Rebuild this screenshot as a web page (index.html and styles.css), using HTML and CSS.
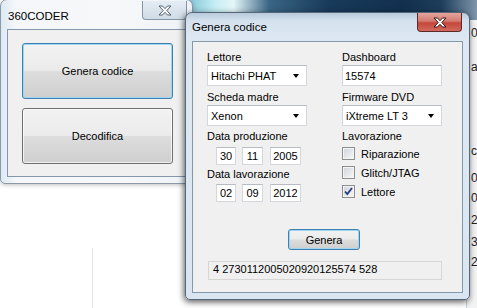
FILE: index.html
```html
<!DOCTYPE html>
<html>
<head>
<meta charset="utf-8">
<link rel="stylesheet" href="styles.css">
</head>
<body>
<div class="desk-top"></div>
<div class="desk-line"></div>
<div class="bgwin">
  <span class="bgrow r1">0</span>
  <span class="bgrow r2">a</span>
  <span class="bgrow r3">c</span>
  <span class="bgrow r4">0</span>
  <span class="bgrow r5">0</span>
  <span class="bgrow r6">2</span>
  <span class="bgrow r7">3</span>
  <span class="bgrow r8">2</span>
</div>

<div class="win win1">
  <div class="titlebar">
    <span class="title t1">360CODER</span>
    <div class="close inactive">
      <svg width="14" height="11" viewBox="0 0 14 11"><path d="M1 1h3.5l2.5 2.7 2.5-2.7h3.5l-4.2 4.5 4.2 4.5h-3.5l-2.5-2.7-2.5 2.7h-3.5l4.2-4.5z" fill="#fff" stroke="#55606c" stroke-width="1"/></svg>
    </div>
  </div>
  <div class="client c1">
    <button class="btn focused big">Genera codice</button>
    <button class="btn big">Decodifica</button>
  </div>
</div>

<div class="win win2">
  <div class="titlebar">
    <span class="title t2">Genera codice</span>
    <div class="close active">
      <svg width="14" height="11" viewBox="0 0 14 11"><path d="M1 1h3.5l2.5 2.7 2.5-2.7h3.5l-4.2 4.5 4.2 4.5h-3.5l-2.5-2.7-2.5 2.7h-3.5l4.2-4.5z" fill="#fff" stroke="#3b1212" stroke-width="1"/></svg>
    </div>
  </div>
  <div class="client c2">
    <div class="cols">
      <div class="col left">
        <div class="lbl">Lettore</div>
        <div class="combo"><span>Hitachi PHAT</span><i class="arrow"></i></div>
        <div class="lbl l2">Scheda madre</div>
        <div class="combo"><span>Xenon</span><i class="arrow"></i></div>
        <div class="lbl l3">Data produzione</div>
        <div class="dates">
          <div class="tb d2">30</div>
          <div class="tb d2b">11</div>
          <div class="tb d4">2005</div>
        </div>
        <div class="lbl l4">Data lavorazione</div>
        <div class="dates d-second">
          <div class="tb d2">02</div>
          <div class="tb d2b">09</div>
          <div class="tb d4">2012</div>
        </div>
      </div>
      <div class="col right">
        <div class="lbl">Dashboard</div>
        <div class="tb field">15574</div>
        <div class="lbl l2">Firmware DVD</div>
        <div class="combo"><span>iXtreme LT 3</span><i class="arrow"></i></div>
        <div class="lbl l3">Lavorazione</div>
        <div class="checks">
          <div class="chk"><span class="box"></span><span>Riparazione</span></div>
          <div class="chk"><span class="box"></span><span>Glitch/JTAG</span></div>
          <div class="chk"><span class="box checked"><svg width="9" height="9" viewBox="0 0 9 9"><path d="M1 4.5l2.3 2.6L8 1" fill="none" stroke="#243f86" stroke-width="1.8"/></svg></span><span>Lettore</span></div>
        </div>
      </div>
    </div>
    <div class="btnrow"><button class="btn focused small">Genera</button></div>
    <div class="result">4 2730112005020920125574 528</div>
  </div>
</div>
</body>
</html>
```

FILE: styles.css
```css
html, body {
  margin: 0;
  padding: 0;
}
body {
  width: 477px;
  height: 308px;
  overflow: hidden;
  position: relative;
  background: #ffffff;
  font-family: "Liberation Sans", Arial, sans-serif;
  font-size: 11px;
  color: #000;
}
.desk-top {
  position: absolute;
  left: 180px;
  top: 0;
  width: 297px;
  height: 40px;
  background: linear-gradient(to right, #6fb8cf 0%, #c6eef4 12%, #e4f6f8 18%, #3a6584 30%, #183a5a 50%, #12304e 75%, #1d3d5b 88%, #7f96ab 100%);
}
.desk-line {
  position: absolute;
  left: 92px;
  top: 248px;
  width: 1px;
  height: 60px;
  background: #dfe6ee;
}
.bgwin {
  position: absolute;
  left: 466px;
  top: 20px;
  width: 11px;
  height: 288px;
  background: #f3f3f3;
  border-left: 1px solid #c8d2dc;
  font-size: 12px;
  color: #222;
}
.bgrow {
  display: block;
  position: absolute;
  left: 4px;
  line-height: 14px;
  white-space: nowrap;
}
.r1 { top: 6px; }
.r2 { top: 40px; }
.r3 { top: 124px; }
.r4 { top: 151px; }
.r5 { top: 171px; }
.r6 { top: 193px; }
.r7 { top: 215px; }
.r8 { top: 235px; }

.win {
  position: absolute;
  box-sizing: border-box;
  border: 1px solid #56677a;
  border-radius: 7px 7px 5px 5px;
  padding: 0 6px 6px 6px;
  display: flex;
  flex-direction: column;
}
.win1 {
  left: 0;
  top: -1px;
  width: 193px;
  height: 185px;
  background: linear-gradient(to right, #dde9f3 0%, #f5f7fa 8%, #f7f8fa 60%, #eef2f6 100%);
  border-color: #8b98a6;
  box-shadow: 0 1px 4px rgba(0,0,0,0.25);
}
.win2 {
  left: 185px;
  top: 12px;
  width: 285px;
  height: 288px;
  background: linear-gradient(to bottom, #b8cadb 0px, #d5e2ee 8px, #dde8f2 28px, #d9e6f1 100%);
  box-shadow: -1px 2px 6px rgba(0,0,0,0.65);
}
.titlebar {
  height: 29px;
  display: flex;
  align-items: flex-start;
  justify-content: space-between;
  position: relative;
}
.win2 .titlebar { height: 28px; }
.title {
  font-size: 11.5px;
  line-height: 14px;
  color: #000;
}
.t1 { margin-top: 9px; margin-left: 1px; }
.t2 { margin-top: 7px; }
.close {
  box-sizing: border-box;
  width: 45px;
  height: 19px;
  border-radius: 0 0 4px 4px;
  display: flex;
  align-items: center;
  justify-content: center;
}
.close.inactive {
  margin-right: -1px;
  margin-top: 1px;
  border: 1px solid #8796a6;
  border-top: none;
  background: linear-gradient(to bottom, #e4edf4, #cfdbe6);
}
.close.active {
  margin-right: 1px;
  border: 1px solid #5b2a27;
  border-top: none;
  background: linear-gradient(to bottom, #e5a59d 0%, #d27b70 45%, #c4463a 55%, #d46a5e 100%);
}
.client {
  flex: 1;
  box-sizing: border-box;
  background: #f0f0f0;
  border: 1px solid #8597aa;
}
.c1 {
  display: flex;
  flex-direction: column;
  padding: 13px 11px 0 14px;
  gap: 9px;
}
.btn {
  box-sizing: border-box;
  font-family: "Liberation Sans", Arial, sans-serif;
  font-size: 11px;
  color: #000;
  border: 1px solid #707070;
  border-radius: 3px;
  background: linear-gradient(to bottom, #f2f2f2 0%, #ebebeb 49%, #dddddd 51%, #cfcfcf 100%);
  box-shadow: inset 0 0 0 1px rgba(255,255,255,0.7);
  padding: 0;
}
.btn.focused {
  border-color: #3c7fb1;
  box-shadow: inset 0 0 0 1px #9fd5f3;
}
.btn.big {
  width: 151px;
  height: 56px;
}
.btn.small {
  width: 72px;
  height: 21px;
}
.c2 {
  padding: 8px 0 0 14px;
  display: flex;
  flex-direction: column;
}
.cols {
  display: flex;
  gap: 35px;
}
.col {
  display: flex;
  flex-direction: column;
}
.col.left { width: 100px; }
.col.right { width: 100px; }
.lbl {
  line-height: 14px;
  height: 14px;
  white-space: nowrap;
}
.combo, .tb {
  box-sizing: border-box;
  background: #fff;
  border: 1px solid #d4d8dd;
  border-top-color: #b7bcc3;
  line-height: 14px;
  white-space: nowrap;
}
.combo {
  height: 21px;
  margin-top: 1px;
  display: flex;
  align-items: center;
  justify-content: space-between;
  padding: 0 7px 0 3px;
}
.arrow {
  width: 0;
  height: 0;
  border-left: 3.5px solid transparent;
  border-right: 3.5px solid transparent;
  border-top: 4px solid #000;
  margin-top: 1px;
}
.tb.field {
  height: 21px;
  margin-top: 1px;
  padding: 3px 3px 0 2px;
}
.l2 { margin-top: 4px; }
.l3 { margin-top: 3px; }
.l4 { margin-top: 2px; }
.dates {
  display: flex;
  margin-top: 4px;
  padding-left: 9px;
}
.d-second { margin-top: 3px; }
.dates .tb {
  height: 18px;
  text-align: center;
  padding-top: 1px;
}
.d2 { width: 20px; }
.d2b { width: 21px; margin-left: 6px; }
.d4 { width: 31px; margin-left: 7px; }
.checks {
  display: flex;
  flex-direction: column;
  margin-top: 1px;
}
.chk {
  height: 19px;
  display: flex;
  align-items: center;
  gap: 6px;
  line-height: 14px;
}
.box {
  box-sizing: border-box;
  width: 13px;
  height: 13px;
  border: 1px solid #8e8f8f;
  background: linear-gradient(135deg, #cfd3d8 0%, #eceef0 70%, #f7f7f7 100%);
  box-shadow: inset 0 0 0 1px #f4f4f4;
  display: flex;
  align-items: center;
  justify-content: center;
}
.btnrow {
  margin-top: 27px;
  padding-left: 81px;
  display: flex;
}
.result {
  box-sizing: border-box;
  margin-top: 11px;
  margin-left: 1px;
  width: 234px;
  height: 19px;
  background: #f0f0f0;
  border: 1px solid #d6d6d6;
  line-height: 15px;
  padding-left: 4px;
  white-space: nowrap;
}
```
